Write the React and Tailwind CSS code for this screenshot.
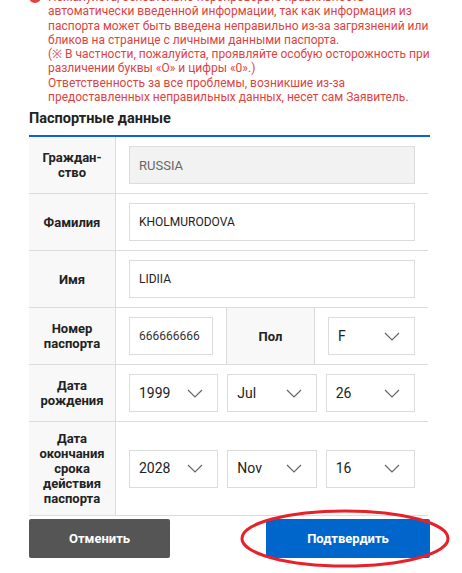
import React from 'react';

const font = { fontFamily: 'Roboto, "Liberation Sans", sans-serif' };

// Chevron for select boxes
const Chevron = () => (
  <svg width="16" height="9" viewBox="0 0 16 9" className="shrink-0">
    <path d="M1 1l7 7 7-7" fill="none" stroke="#666" strokeWidth="1.2" />
  </svg>
);

const Select = ({ value, className = '' }) => (
  <div className={`h-[38px] border border-[#dcdcdc] bg-white flex items-center justify-between pl-[9px] pr-[14px] text-[14px] text-[#222] ${className}`}>
    <span>{value}</span>
    <Chevron />
  </div>
);

const Input = ({ value, disabled }) => (
  <div className={`h-[38px] border border-[#dcdcdc] flex items-center px-[9px] ${disabled ? 'bg-[#f2f2f2] text-[#666] text-[13px]' : 'bg-white text-[#222] text-[12px]'}`}>
    {value}
  </div>
);

const Label = ({ children, className = '' }) => (
  <div className={`bg-[#f8f8f8] border-r border-[#dcdcdc] flex items-center justify-center text-center font-bold text-[13px] leading-[15px] text-[#222] px-1 ${className}`}>
    {children}
  </div>
);

const Row = ({ label, children }) => (
  <div className="flex border-b border-[#dcdcdc]">
    <Label className="w-[87px] shrink-0">{label}</Label>
    <div className="flex-1 flex items-center">{children}</div>
  </div>
);

export default function App() {
  return (
    <div className="w-[462px] h-[573px] overflow-hidden bg-white" style={font}>
      <div className="pl-[29px] pr-[32px]">
        {/* Warning */}
        <div className="flex mt-[-10px] text-[12px] leading-[14.3px] text-[#e0433f]">
          <div className="w-[19px] shrink-0 pt-[1px]">
            <div className="w-[12px] h-[12px] rounded-full bg-[#e0433f] text-white text-[9px] font-bold flex items-center justify-center leading-none">!</div>
          </div>
          <div>
            <p>Пожалуйста, обязательно перепроверьте правильность автоматически введенной информации, так как информация из паспорта может быть введена неправильно из-за загрязнений или бликов на странице с личными данными паспорта.</p>
            <p>(※ В частности, пожалуйста, проявляйте особую осторожность при различении буквы «O» и цифры «0».)</p>
            <p>Ответственность за все проблемы, возникшие из-за предоставленных неправильных данных, несет сам Заявитель.</p>
          </div>
        </div>

        {/* Title */}
        <h2 className="mt-[5px] text-[14.5px] font-bold text-[#222] leading-[20px] pb-[6px] border-b-2 border-[#0a66cc]">Паспортные данные</h2>

        <div className="w-[399px]">
          <Row label={<>Граждан-<br />ство</>}>
            <div className="w-full px-[13px] py-[9px]"><Input value="RUSSIA" disabled /></div>
          </Row>
          <Row label="Фамилия">
            <div className="w-full px-[13px] py-[9px]"><Input value="KHOLMURODOVA" /></div>
          </Row>
          <Row label="Имя">
            <div className="w-full px-[13px] py-[9px]"><Input value="LIDIIA" /></div>
          </Row>
          <Row label={<>Номер<br />паспорта</>}>
            <div className="flex w-full self-stretch">
              <div className="w-[111px] px-[13px] py-[9px] border-r border-[#dcdcdc]">
                <div className="h-[38px] border border-[#dcdcdc] bg-white flex items-center px-[9px] text-[12px] text-[#333]">666666666</div>
              </div>
              <Label className="w-[88px]">Пол</Label>
              <div className="flex-1 px-[13px] py-[9px]"><Select value="F" /></div>
            </div>
          </Row>
          <Row label={<>Дата<br />рождения</>}>
            <div className="w-full px-[13px] py-[9px] grid grid-cols-3 gap-[9px]">
              <Select value="1999" />
              <Select value="Jul" />
              <Select value="26" />
            </div>
          </Row>
          <div className="flex border-b border-[#dcdcdc]">
            <Label className="w-[87px] shrink-0 py-[9px]">Дата<br />окончания<br />срока<br />действия<br />паспорта</Label>
            <div className="flex-1 flex items-center">
              <div className="w-full px-[13px] grid grid-cols-3 gap-[9px]">
                <Select value="2028" />
                <Select value="Nov" />
                <Select value="16" />
              </div>
            </div>
          </div>
        </div>

        {/* Buttons */}
        <div className="relative flex justify-between mt-[3px]">
          <button className="w-[141px] h-[39px] bg-[#555555] rounded-[2px] text-white font-bold text-[13px]">Отменить</button>
          <button className="w-[164px] h-[39px] bg-[#0066cc] rounded-[2px] text-white font-bold text-[13px]">Подтвердить</button>
          <svg className="absolute left-[211px] top-[-10px] pointer-events-none" width="210" height="59" viewBox="0 0 210 59">
            <ellipse cx="105" cy="29.5" rx="103" ry="27.5" fill="none" stroke="#e8202a" strokeWidth="3" />
          </svg>
        </div>
      </div>
    </div>
  );
}
